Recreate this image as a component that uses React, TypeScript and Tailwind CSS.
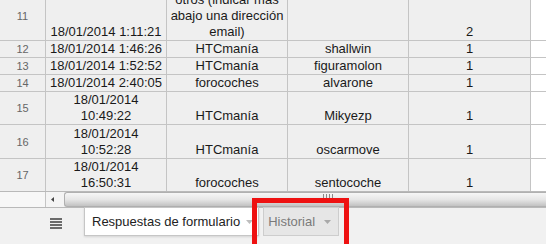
import React from 'react'

type Row = {
    num: number
    h: string
    date: string[]
    source: string[]
    user: string
    count: string
}

const rows: Row[] = [
    { num: 11, h: 'h-[48px]', date: ['18/01/2014 1:11:21'], source: ['otros (indicar más', 'abajo una dirección', 'email)'], user: '', count: '2' },
    { num: 12, h: 'h-[16px]', date: ['18/01/2014 1:46:26'], source: ['HTCmanía'], user: 'shallwin', count: '1' },
    { num: 13, h: 'h-[16px]', date: ['18/01/2014 1:52:52'], source: ['HTCmanía'], user: 'figuramolon', count: '1' },
    { num: 14, h: 'h-[16px]', date: ['18/01/2014 2:40:05'], source: ['forocoches'], user: 'alvarone', count: '1' },
    { num: 15, h: 'h-[32px]', date: ['18/01/2014', '10:49:22'], source: ['HTCmanía'], user: 'Mikyezp', count: '1' },
    { num: 16, h: 'h-[33px]', date: ['18/01/2014', '10:52:28'], source: ['HTCmanía'], user: 'oscarmove', count: '1' },
    { num: 17, h: 'h-[32px]', date: ['18/01/2014', '16:50:31'], source: ['forocoches'], user: 'sentocoche', count: '1' },
]

function Cell({ lines, w }: { lines: string[], w: string }) {
    return (
        <div className={`${w} shrink-0 border-r border-[#c4c4c4] flex flex-col justify-end items-center text-center px-[2px] overflow-hidden`}>
            {lines.map((l, i) => (
                <div key={i} className="whitespace-nowrap">{l}</div>
            ))}
        </div>
    )
}

function Caret({ color }: { color: string }) {
    return (
        <svg width="7" height="4" viewBox="0 0 7 4" className="shrink-0">
            <path d="M0 0 H7 L3.5 4 Z" fill={color} />
        </svg>
    )
}

export default function App() {
    return (
        <div className="w-[546px] h-[244px] overflow-hidden relative bg-white font-['Liberation_Sans',Arial,sans-serif]">
            {/* grid */}
            <div className="-mt-[8px] text-[13px] leading-[16px] text-[#1a1a1a]">
                {rows.map((r, idx) => (
                    <div
                        key={r.num}
                        className={`flex ${r.h} box-content ${idx < rows.length - 1 ? 'border-b border-[#c4c4c4]' : ''}`}
                    >
                        <div className="w-[46px] shrink-0 bg-[#efefef] border-r border-[#c4c4c4] flex items-center justify-center text-[11px] text-[#666]">
                            {r.num}
                        </div>
                        <div className="flex bg-[#efefef]">
                            <Cell lines={r.date} w="w-[121px]" />
                            <Cell lines={r.source} w="w-[121px]" />
                            <Cell lines={r.user ? [r.user] : []} w="w-[121px]" />
                            <Cell lines={[r.count]} w="w-[122px]" />
                        </div>
                        <div className="flex-1 bg-white" />
                    </div>
                ))}
            </div>

            {/* horizontal scrollbar */}
            <div className="flex h-[15px] box-content border-y border-[#b9b9b9] bg-[#f4f4f4] overflow-hidden">
                <div className="w-[46px] shrink-0 border-r border-[#c4c4c4] bg-[#f7f7f7]" />
                <div className="w-[18px] shrink-0 flex items-center pl-[5px]">
                    <svg width="3" height="5" viewBox="0 0 3 5">
                        <path d="M3 0 V5 L0 2.5 Z" fill="#444" />
                    </svg>
                </div>
                <div className="flex-1 rounded-l-[3px] border border-r-0 border-[#b0b0b0] bg-gradient-to-b from-[#f6f6f6] via-[#e6e6e6] to-[#c2c2c2] flex items-start pt-[1px] pl-[258px]">
                    <div className="flex gap-[2px] h-[8px]">
                        <div className="w-px bg-[#8a8a8a]" />
                        <div className="w-px bg-[#8a8a8a]" />
                        <div className="w-px bg-[#8a8a8a]" />
                        <div className="w-px bg-[#8a8a8a]" />
                    </div>
                </div>
            </div>

            {/* sheet tabs */}
            <div className="h-[36px] bg-[#f1f1f1] flex items-start">
                <div className="ml-[50px] mt-[10px] w-[12px]">
                    <svg width="12" height="11" viewBox="0 0 12 11">
                        <rect x="0" y="0" width="12" height="2" fill="#6b6b6b" />
                        <rect x="0" y="3" width="12" height="2" fill="#6b6b6b" />
                        <rect x="0" y="6" width="12" height="2" fill="#6b6b6b" />
                        <rect x="0" y="9" width="12" height="2" fill="#6b6b6b" />
                    </svg>
                </div>
                <div className="ml-[22px] -mt-px h-[29px] flex items-center gap-[6px] pl-[7px] pr-[5px] bg-white border border-[#c6c6c6] shadow-[0_1px_2px_rgba(0,0,0,0.12)] text-[13px] text-[#222]">
                    <span className="whitespace-nowrap pt-px">Respuestas de formulario</span>
                    <Caret color="#bdbdbd" />
                </div>
                <div className="ml-[4px] -mt-px h-[29px] flex items-center gap-[9px] pl-[4px] pr-[7px] bg-[#e6e6e6] border border-[#cdcdcd] text-[13px] text-[#7a7a7a]">
                    <span className="whitespace-nowrap pt-px">Historial</span>
                    <Caret color="#a9a9a9" />
                </div>
            </div>

            {/* red highlight box */}
            <div className="absolute left-[252px] top-[198px] w-[97px] h-[60px] border-[5px] border-[#ee1111]" />
        </div>
    )
}
